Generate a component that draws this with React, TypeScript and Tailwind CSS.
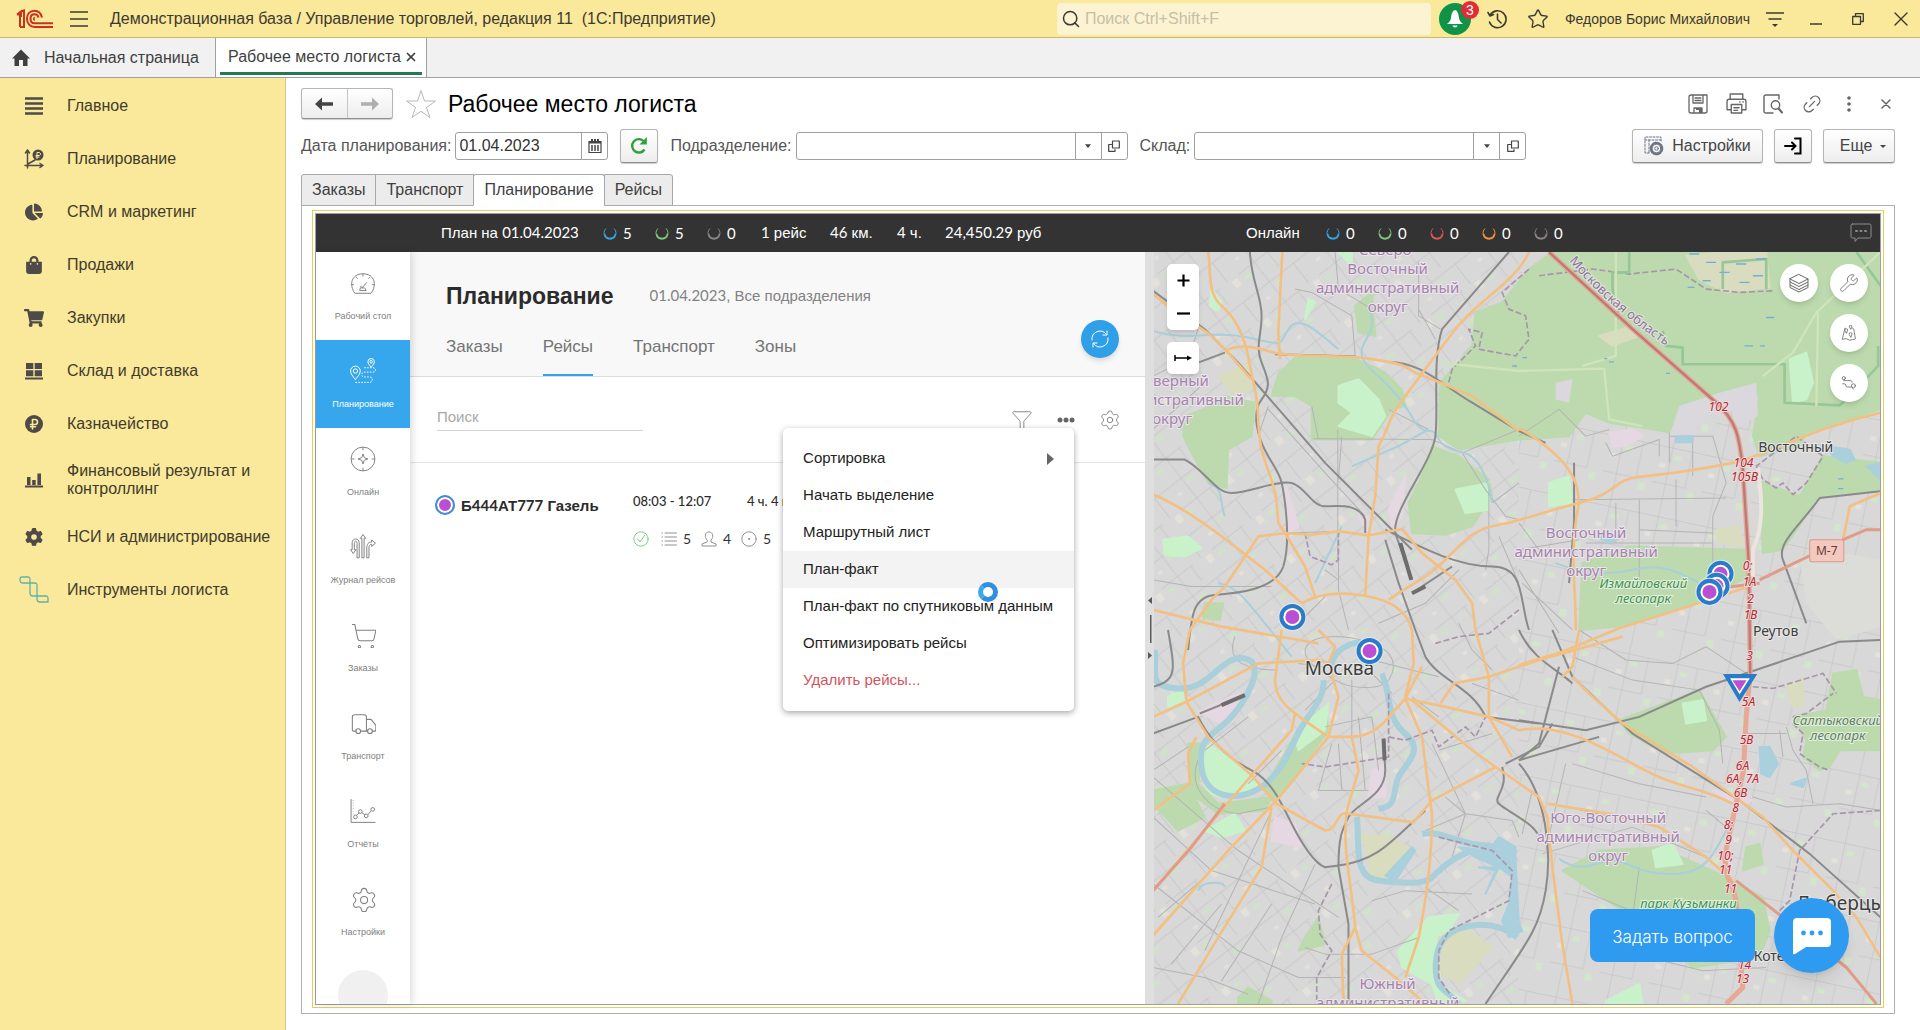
import type { ReactNode } from 'react'
import { Filter, Link2, Search, Settings, ShoppingCart, Star, Truck, Wrench, X } from 'lucide-react'
import { FaChartPie, FaShoppingBag, FaShoppingCart } from 'react-icons/fa'
import { FaGear } from 'react-icons/fa6'

interface IconProps {
  children: ReactNode
  className?: string
  box?: string
}

function Icon({ children, className = 'size-5', box = '0 0 24 24' }: IconProps) {
  return (
    <svg
      viewBox={box}
      className={`shrink-0 ${className}`}
      fill="none"
      stroke="currentColor"
      strokeLinecap="round"
      strokeLinejoin="round"
      aria-hidden="true"
    >
      {children}
    </svg>
  )
}

/* ---------- Title bar ---------- */

function Logo() {
  return (
    <svg viewBox="0 0 38 20" className="h-5 w-[38px] shrink-0" fill="none" stroke="#c8321f" strokeWidth="2" aria-hidden="true">
      <path d="M1 5.5 5 2.5V8M1 5.5H4V18M4 18H8V1.5L5 2.5" />
      <path d="M26 8.5C25 4 22 1.7 18.5 1.7C14 1.7 11 5 11 9.7C11 14.5 14 18 18.5 18H37" />
      <path d="M22.5 8.5C22 6.5 20.5 5.3 18.5 5.3C16 5.3 14.5 7.2 14.5 9.7C14.5 12.5 16.2 14.3 18.7 14.3H37" />
      <path d="M19 8.5C17 9 17.5 11 19 11" strokeWidth="1.5" />
    </svg>
  )
}

function TitleBar() {
  return (
    <header className="flex h-[38px] shrink-0 items-center border-b border-[#c9b868] bg-[#fae89b] pl-4 text-[#3c3a30]">
      <Logo />
      <button aria-label="Меню" className="ml-4">
        <Icon className="size-[18px]" box="0 0 18 18">
          <path d="M0 2H18M0 9H18M0 16H18" strokeWidth="1.5" />
        </Icon>
      </button>
      <h1 className="ml-[22px] text-base whitespace-pre">Демонстрационная база / Управление торговлей, редакция 11  (1С:Предприятие)</h1>

      <label className="ml-auto flex h-8 w-[374px] items-center gap-1 rounded-sm bg-[#fcf3d3] pl-1">
        <Search className="size-5 shrink-0" strokeWidth={1.8} />
        <span className="sr-only">Поиск</span>
        <input placeholder="Поиск Ctrl+Shift+F" className="h-full min-w-0 flex-1 bg-transparent text-base outline-none placeholder:text-[#c6bfa4]" />
      </label>
      <button aria-label="Уведомления" className="relative ml-2 flex size-8 items-center justify-center rounded-full bg-[#0f9347] text-white">
        <svg viewBox="0 0 20 20" className="size-5" fill="currentColor" aria-hidden="true">
          <path d="M10 1C7 2 6.5 5 6 9C5.5 12 4 13 2 15H18C16 13 14.5 12 14 9C13.5 5 13 2 10 1ZM7.5 16.5C8 19 12 19 12.5 16.5Z" />
        </svg>
        <span className="absolute -top-0.5 -right-2 flex size-[18px] items-center justify-center rounded-full bg-[#e12b35] text-sm">3</span>
      </button>
      <button aria-label="История" className="ml-4">
        <Icon className="size-5" box="0 0 20 20">
          <path d="M3.2 6A8.5 8.5 0 1 1 2.5 13M1 3.5 3 7 6.5 5.5M10.500 5V10.5L14 14" strokeWidth="1.6" />
        </Icon>
      </button>
      <button aria-label="Избранное" className="ml-5">
        <Star className="size-[22px]" strokeWidth={1.5} />
      </button>
      <span className="ml-4 text-sm">Федоров Борис Михайлович</span>
      <button aria-label="Сервис" className="ml-4">
        <Icon className="size-[18px]" box="0 0 18 18">
          <path d="M0 3H18M3 9H15" strokeWidth="1.5" />
          <path d="M6 14H12L9 17Z" fill="currentColor" stroke="none" />
        </Icon>
      </button>
      <button aria-label="Свернуть" className="ml-[26px]">
        <Icon className="size-3" box="0 0 12 12">
          <path d="M0 11H12" strokeWidth="1.4" />
        </Icon>
      </button>
      <button aria-label="Восстановить" className="ml-[30px]">
        <Icon className="size-3" box="0 0 12 12">
          <path d="M.7 3.5H8.5V11.3H.7ZM3.5 3V.7H11.3V8.5H9" strokeWidth="1.3" />
        </Icon>
      </button>
      <button aria-label="Закрыть" className="mr-3 ml-[30px]">
        <Icon className="size-[14px]" box="0 0 14 14">
          <path d="M1 1 13 13M13 1 1 13" strokeWidth="1.4" />
        </Icon>
      </button>
    </header>
  )
}

function WindowTabs() {
  return (
    <nav className="flex h-10 shrink-0 border-b border-[#a0a0a0] bg-[#f1f1f1] text-base text-[#3f3f3f]">
      <a href="#home" className="flex w-[215px] items-center gap-3.5 pl-3 whitespace-nowrap">
        <svg viewBox="0 0 18 18" className="size-[18px] shrink-0" fill="currentColor" aria-hidden="true">
          <path d="M9 .5 18 9.500H15.500V17H11V11H7V17H2.500V9.500H0Z" />
        </svg>
        Начальная страница
      </a>
      <div className="flex w-[212px] border-x border-[#a0a0a0] bg-white px-1 pb-0.5">
        <div className="flex w-full items-center justify-between border-b-[3px] border-[#217a53] pt-1 pr-1 pl-2 whitespace-nowrap">
          <a href="#logist">Рабочее место логиста</a>
          <button aria-label="Закрыть вкладку">
            <X className="size-[14px]" strokeWidth={3} />
          </button>
        </div>
      </div>
    </nav>
  )
}

/* ---------- Yellow section panel ---------- */

const sections: { label: string; icon: ReactNode }[] = [
  {
    label: 'Главное',
    icon: (
      <Icon className="size-[18px]" box="0 0 18 18">
        <path d="M0 1.500H18M0 6.500H18M0 11.500H18M0 16.500H18" strokeWidth="2.400" strokeLinecap="butt" />
      </Icon>
    ),
  },
  {
    label: 'Планирование',
    icon: (
      <Icon className="size-5" box="0 0 20 20">
        <path d="M3.500 19V2M1.500 4 3.500 1 5.500 4M1 16.500H18M16 14.500 19 16.500 16 18.500M4 15 11 11" strokeWidth="1.500" />
        <circle cx="14" cy="6" r="5.500" fill="currentColor" stroke="none" />
        <path d="M13 9.500V3.500H15C17 3.500 17 6.500 15 6.500H12M12 8H15" stroke="#fae89b" />
      </Icon>
    ),
  },
  { label: 'CRM и маркетинг', icon: <FaChartPie className="size-[18px]" /> },
  { label: 'Продажи', icon: <FaShoppingBag className="size-[18px]" /> },
  { label: 'Закупки', icon: <FaShoppingCart className="size-5" /> },
  {
    label: 'Склад и доставка',
    icon: (
      <svg viewBox="0 0 18 18" className="size-[18px]" fill="currentColor" aria-hidden="true">
        <path d="M1 1H8.300V7H1ZM9.700 1H17V7H9.700ZM1 8.300H8.300V14.300H1ZM9.700 8.300H17V14.300H9.700ZM0 15.500H18V17.500H0Z" />
      </svg>
    ),
  },
  {
    label: 'Казначейство',
    icon: (
      <Icon className="size-[18px]" box="0 0 18 18">
        <circle cx="9" cy="9" r="9" fill="currentColor" stroke="none" />
        <path d="M7.500 14V4.500H10C13.300 4.500 13.300 9.500 10 9.500H5.500M5.500 11.700H10.500" stroke="#fae89b" strokeWidth="1.600" />
      </Icon>
    ),
  },
  {
    label: 'Финансовый результат и контроллинг',
    icon: (
      <svg viewBox="0 0 18 16" className="h-4 w-[18px]" fill="currentColor" aria-hidden="true">
        <path d="M2 5H5.500V13H2ZM7.200 8H10.700V13H7.200ZM12.400 1.500H16V13H12.400ZM0 13.500H18V15.500H0Z" />
      </svg>
    ),
  },
  { label: 'НСИ и администрирование', icon: <FaGear className="size-[18px]" /> },
  {
    label: 'Инструменты логиста',
    icon: (
      <Icon className="size-[30px]" box="0 0 30 30">
        <g stroke="#62b1a9" strokeWidth="1.300">
          <path d="M1 4C1 2 2 2 3 2H9C11 2 11 3 11 5V8H4C2 8 1 7 1 5Z" />
          <path d="M11 8H16C18 8 18 9 18 11V21H14C12 21 11 20 11 18Z" />
          <path d="M18 21H27C29 21 29 22 29 24V27H21C19 27 18 26 18 24Z" />
        </g>
      </Icon>
    ),
  },
]

function SectionPanel() {
  return (
    <aside className="w-[286px] shrink-0 border-r border-[#d3c687] bg-[#fae89b] pt-px">
      {sections.map(({ label, icon }) => (
        <a key={label} href="#section" className="flex min-h-[53px] items-center py-3 pr-3 text-base leading-[18px] text-[#3f3c2c]">
          <span className="flex w-[67px] shrink-0 items-center justify-center text-[#4d4a48]">{icon}</span>
          {label}
        </a>
      ))}
    </aside>
  )
}

/* ---------- Form header ---------- */

const raised = 'rounded-[3px] border border-[#b5b5b5] border-b-[#8f8f8f] bg-gradient-to-b from-white to-[#ededed] shadow-[0_1px_1px_rgba(0,0,0,0.2)]'

function FormHeader() {
  return (
    <div className="flex items-center">
      <div className={`flex h-[31px] w-[92px] ${raised}`}>
        <button aria-label="Назад" className="flex flex-1 items-center justify-center border-r border-[#c4c4c4] text-[#444]">
          <svg viewBox="0 0 18 14" className="h-[14px] w-[18px]" fill="currentColor" aria-hidden="true">
            <path d="M0 7 7 0.500V5.300H18V8.700H7V13.500Z" />
          </svg>
        </button>
        <button aria-label="Вперед" className="flex flex-1 items-center justify-center text-[#b0b0b0]">
          <svg viewBox="0 0 18 14" className="h-[14px] w-[18px]" fill="currentColor" aria-hidden="true">
            <path d="M18 7 11 0.500V5.300H0V8.700H11V13.500Z" />
          </svg>
        </button>
      </div>
      <button aria-label="В избранное" className="ml-3 text-[#b8b8b8]">
        <svg viewBox="0 0 32 30" className="h-[30px] w-8" fill="none" stroke="currentColor" aria-hidden="true">
          <path d="M16 1.500 19.500 12H30.500L21.500 18.500 25 28.500 16 22.300 7 28.500 10.500 18.500 1.500 12H12.500Z" />
        </svg>
      </button>
      <h2 className="ml-[11px] text-[23px] leading-[30px] text-black">Рабочее место логиста</h2>
      <div className="ml-auto flex items-center text-[#666]">
        <button aria-label="Сохранить">
          <Icon className="size-5" box="0 0 20 20">
            <path d="M1 3V17Q1 19 3 19H17Q19 19 19 17V1H3Q1 1 1 3ZM5 1V9H15V1M7 4H13M7 6.500H13M6 19V14H14V19" strokeWidth="1.300" />
            <path d="M8 14H14V19H11V16H8Z" fill="currentColor" stroke="none" />
          </Icon>
        </button>
        <button aria-label="Печать" className="ml-[18px]">
          <Icon className="size-[21px]" box="0 0 20 20">
            <path d="M4 6V1H16V6M4 16H1V8Q1 6 3 6H17Q19 6 19 8V16H16M5 11H15V19H5ZM7.500 14H12.500M7.500 16.500H11M13 8.500H13.500M16 8.500H16.500" strokeWidth="1.300" />
          </Icon>
        </button>
        <button aria-label="Предварительный просмотр" className="ml-4">
          <Icon className="size-5" box="0 0 20 20">
            <path d="M10 19H3Q1 19 1 17V3Q1 1 3 1H16V5" strokeWidth="1.400" />
            <circle cx="12.500" cy="11" r="4.200" strokeWidth="1.400" />
            <path d="M15.500 14.500 19 18.500" strokeWidth="2" />
          </Icon>
        </button>
        <button aria-label="Получить ссылку" className="ml-[18px]">
          <Link2 className="size-[22px] -rotate-45" strokeWidth={1.4} />
        </button>
        <button aria-label="Дополнительно" className="ml-4">
          <svg viewBox="0 0 20 20" className="size-5" fill="currentColor" aria-hidden="true">
            <circle cx="10" cy="4" r="1.800" />
            <circle cx="10" cy="10" r="1.800" />
            <circle cx="10" cy="16" r="1.800" />
          </svg>
        </button>
        <button aria-label="Закрыть форму" className="mr-1 ml-[22px]">
          <Icon className="size-[10px]" box="0 0 10 10">
            <path d="M1 1 9 9M9 1 1 9" strokeWidth="1.5" />
          </Icon>
        </button>
      </div>
    </div>
  )
}

function LookupField({ id, label }: { id: string; label: string }) {
  return (
    <div className="flex items-center">
      <label htmlFor={id} className="pr-1 text-[#555]">
        {label}
      </label>
      <div className="flex h-7 w-[332px] rounded-[3px] border border-[#a0a0a0] bg-white">
        <input id={id} className="min-w-0 flex-1 px-1 outline-none" />
        <button aria-label={`${label} выбрать из списка`} className="flex w-[26px] items-center justify-center border-l border-[#a0a0a0] text-[#444]">
          <svg viewBox="0 0 8 5" className="h-1 w-1.5" fill="currentColor" aria-hidden="true">
            <path d="M0 0H8L4 5Z" />
          </svg>
        </button>
        <button aria-label={`${label} открыть`} className="flex w-[26px] items-center justify-center border-l border-[#a0a0a0] text-[#444]">
          <Icon className="size-3" box="0 0 12 12">
            <path d="M4.500 1H11.300V8H4.500ZM3.500 4.500H.7V11.300H7V9.500" strokeWidth="1.200" />
          </Icon>
        </button>
      </div>
    </div>
  )
}

function FilterRow() {
  return (
    <div className="mt-2.5 flex h-[34px] items-center text-base">
      <label htmlFor="plan-date" className="pr-1 text-[#555]">
        Дата планирования:
      </label>
      <div className="flex h-7 w-[153px] rounded-[3px] border border-[#a0a0a0]">
        <input id="plan-date" defaultValue="01.04.2023" className="min-w-0 flex-1 px-[3px] text-[#333] outline-none" />
        <button aria-label="Календарь" className="flex w-[26px] items-center justify-center border-l border-[#a0a0a0] text-[#444]">
          <svg viewBox="0 0 14 14" className="size-[14px]" fill="none" stroke="currentColor" aria-hidden="true">
            <path d="M1 2.500H13V13.500H1Z" strokeWidth="1.200" />
            <path d="M1 3.500H13M4 0V3M7 0V3M10 0V3" strokeWidth="2" />
            <path d="M3 7H5M6 7H8M9 7H11M3 9H5M6 9H8M9 9H11M3 11H5M6 11H8M9 11H11" strokeWidth="1.300" />
          </svg>
        </button>
      </div>
      <button aria-label="Обновить" className={`mr-3 ml-3 flex h-[34px] w-[38px] items-center justify-center ${raised}`}>
        <svg viewBox="0 0 18 18" className="size-[18px]" fill="none" stroke="#2fa23b" strokeWidth="2.4" aria-hidden="true">
          <path d="M14.500 12.500A6.700 6.700 0 1 1 13.500 4" />
          <path d="M16.800 0V7.500H9.500Z" fill="#2fa23b" stroke="none" />
        </svg>
      </button>
      <LookupField id="department" label="Подразделение:" />
      <div className="w-3 shrink-0" />
      <LookupField id="warehouse" label="Склад:" />
      <div className="ml-auto flex gap-[11px] text-[#444]">
        <button className={`flex h-[34px] w-[131px] items-center justify-center gap-2 ${raised}`}>
          <Icon className="size-5 text-[#6c7484]" box="0 0 20 20">
            <path d="M5 17H1V1H17V5M1 4H17M5 4V17" strokeWidth="1" strokeDasharray="2 1.500" />
            <circle cx="12.500" cy="12.500" r="5.500" strokeWidth="2.600" strokeDasharray="2.600 1.720" />
            <circle cx="12.500" cy="12.500" r="4.300" fill="#f7f7f7" />
            <circle cx="12.500" cy="12.500" r="1.800" />
          </Icon>
          Настройки
        </button>
        <button aria-label="Войти" className={`flex h-[34px] w-[38px] items-center justify-center text-black ${raised}`}>
          <Icon className="size-[18px]" box="0 0 18 18">
            <path d="M1 9H11M8 5.500 11.500 9 8 12.500M11 1.500H16.500V16.500H11" strokeWidth="2" strokeLinejoin="miter" />
          </Icon>
        </button>
        <button className={`flex h-[34px] w-[72px] items-center justify-center gap-2 pl-2 ${raised}`}>
          Еще
          <svg viewBox="0 0 6 3" className="h-[3px] w-1.5" fill="currentColor" aria-hidden="true">
            <path d="M0 0H6L3 3Z" />
          </svg>
        </button>
      </div>
    </div>
  )
}

function FormTabs() {
  const tab = 'h-8 border border-[#a8a8a8] px-2.5 text-base text-[#3f3f3f]'
  return (
    <div className="relative z-10 mt-[11px] -mb-px flex" role="tablist">
      <button role="tab" className={`${tab} rounded-tl-[3px] bg-[#ececec]`}>Заказы</button>
      <button role="tab" className={`${tab} -ml-px bg-[#ececec]`}>Транспорт</button>
      <button role="tab" aria-selected="true" className={`${tab} -ml-px rounded-t-[3px] border-b-white bg-white`}>Планирование</button>
      <button role="tab" className={`${tab} -ml-px rounded-tr-[3px] bg-[#ececec]`}>Рейсы</button>
    </div>
  )
}

/* ---------- Embedded planner ---------- */

const numeric = "font-['Lato',sans-serif]"

function Counter({ color, value }: { color: string; value: string }) {
  return (
    <span className={`flex w-[52px] items-center gap-1.5 ${numeric}`}>
      <svg viewBox="0 0 14 14" className="size-[14px]" fill="none" stroke={color} aria-hidden="true">
        <path d="M3 2.500A6 6 0 1 0 11 2.500" strokeWidth="1" />
        <path d="M1.500 8A5.600 5.600 0 0 0 12.500 8" strokeWidth="1.700" />
      </svg>
      {value}
    </span>
  )
}

function StatusBar() {
  return (
    <div className="flex h-[38px] shrink-0 items-center bg-[#333] pr-2 pl-[125px] text-[15px] text-white">
      <span className="w-[162px]">
        План на <span className={numeric}>01.04.2023</span>
      </span>
      <Counter color="#36a3e6" value="5" />
      <Counter color="#7cc47f" value="5" />
      <Counter color="#858585" value="0" />
      <span className="ml-0.5 w-[69px]">
        <span className={numeric}>1</span> рейс
      </span>
      <span className="w-[67px]">
        <span className={numeric}>46</span> км.
      </span>
      <span className="w-12">
        <span className={numeric}>4</span> ч.
      </span>
      <span>
        <span className={numeric}>24,450.29</span> руб
      </span>
      <div className="ml-auto flex items-center">
        <span className="w-20">Онлайн</span>
        <Counter color="#36a3e6" value="0" />
        <Counter color="#7cc47f" value="0" />
        <Counter color="#dc5558" value="0" />
        <Counter color="#f0943c" value="0" />
        <Counter color="#8a8086" value="0" />
      </div>
      <button aria-label="Сообщения" className="ml-[264px] text-[#8d8d8d]">
        <Icon className="size-[22px]" box="0 0 22 22">
          <path d="M2.500 2H19.500Q21 2 21 3.500V14.500Q21 16 19.500 16H8L5 19.500V16H2.500Q1 16 1 14.500V3.500Q1 2 2.500 2Z" />
          <path d="M6 9H7M10.500 9H11.500M15 9H16" strokeWidth="2" />
        </Icon>
      </button>
    </div>
  )
}

const modules: { label: string; active?: boolean; icon: ReactNode }[] = [
  {
    label: 'Рабочий стол',
    icon: (
      <>
        <path d="M4.500 21.500C-1 14 1 3.500 12 3.500C23 3.500 25 14 19.500 21.500ZM12 3.500V6M5.500 6.500 7 8M18.500 6.500 17 8M1 13.500H3.500M20.500 13.500H23" />
        <path d="M9 19 9.500 16.500H13.500L15 19ZM11 16.500 15.500 11.500M9.500 16 10.500 14.500" />
      </>
    ),
  },
  {
    label: 'Планирование',
    active: true,
    icon: (
      <>
        <path d="M5 20C2.500 16.500 .5 14.500 .5 12A4.500 4.500 0 0 1 9.500 12C9.500 14.500 7.500 16.500 5 20ZM19.500 8.500C17.500 6 16.500 5 16.500 3.500A3 3 0 0 1 22.500 3.500C22.500 5 21.500 6 19.500 8.500Z" />
        <circle cx="5" cy="12" r="2" />
        <circle cx="19.500" cy="3.500" r="1.200" />
        <path d="M5 22.500H18Q20.500 22.500 20.500 20T18 17.500H13Q11 17.500 11 15.500T13 13H21Q23.500 13 23.500 11T21 9H12" strokeDasharray="1.500 1.200" />
      </>
    ),
  },
  {
    label: 'Онлайн',
    icon: (
      <>
        <circle cx="12" cy="12" r="11" />
        <path d="M12 1V4M12 20V23M1 12H4M20 12H23M12 7.500 13.200 10.800 16.500 12 13.200 13.200 12 16.500 10.800 13.200 7.500 12 10.800 10.800Z" />
      </>
    ),
  },
  {
    label: 'Журнал рейсов',
    icon: (
      <path d="M3 18 .5 14.500H2V8C2 3.500 8.500 3.500 8.500 8V22H6.500V8.500C6.500 6 4 6 4 8.500V14.500H5.500ZM11 22V4H9.500L12 .5 14.500 4H13V22ZM15.500 22V13C15.500 9 17 7.500 20 7.500V5.500L23.500 8.500 20 11.500V9.500C18 9.500 17.500 11 17.500 13V22Z" />
    ),
  },
  { label: 'Заказы', icon: <ShoppingCart className="size-[26px]" strokeWidth={0.9} /> },
  { label: 'Транспорт', icon: <Truck className="size-[26px]" strokeWidth={0.9} /> },
  {
    label: 'Отчёты',
    icon: (
      <>
        <path d="M1 1V22.500H23.500" />
        <path d="M3 2V15" strokeDasharray=".5 2" />
        <circle cx="5" cy="17.500" r="1.700" />
        <circle cx="9.500" cy="12.500" r="1.700" />
        <circle cx="15" cy="16.500" r="1.700" />
        <circle cx="21" cy="10.500" r="1.700" />
        <path d="M6 16 8.500 13.800M11 13.500 13.500 15.500M16.500 15.500 19.500 11.700" />
      </>
    ),
  },
  { label: 'Настройки', icon: <Settings className="size-[26px]" strokeWidth={0.9} /> },
]

function ModuleRail() {
  return (
    <nav className="relative z-10 w-[94px] shrink-0 overflow-hidden bg-white shadow-[2px_0_8px_rgba(0,0,0,0.15)]">
      {modules.map(({ label, active, icon }) => (
        <a
          key={label}
          href="#module"
          className={`flex h-[88px] flex-col items-center justify-center gap-3.5 text-[9px] leading-3 whitespace-nowrap ${active ? 'bg-[#36a7ec] text-white' : 'text-[#808080]'}`}
        >
          <svg viewBox="0 0 24 24" className="size-[26px] shrink-0" fill="none" stroke="currentColor" strokeWidth="0.9" aria-hidden="true">
            {icon}
          </svg>
          {label}
        </a>
      ))}
      <div className="mx-auto mt-3.5 size-[50px] rounded-full bg-[#f0f0f0]" />
    </nav>
  )
}

const menuItems = ['Сортировка', 'Начать выделение', 'Маршрутный лист', 'План-факт', 'План-факт по спутниковым данным', 'Оптимизировать рейсы', 'Удалить рейсы...']

function TripMenu() {
  return (
    <div role="menu" className="absolute top-[176px] right-[71px] w-[291px] rounded-[5px] bg-white py-3 text-[15px] text-[#222] shadow-[0_2px_6px_rgba(0,0,0,0.35)]">
      {menuItems.map((item, i) => (
        <button
          key={item}
          role="menuitem"
          className={`flex h-[37px] w-full items-center justify-between px-5 whitespace-nowrap ${i === 3 ? 'bg-[#f3f3f3]' : ''} ${i === 6 ? 'text-[#d4545c]' : ''}`}
        >
          {item}
          {i === 0 && (
            <svg viewBox="0 0 7 12" className="h-3 w-[7px]" fill="#666" aria-hidden="true">
              <path d="M0 0 7 6 0 12Z" />
            </svg>
          )}
        </button>
      ))}
      <span className="absolute top-[154px] right-[76px] size-5 rounded-full border-[5px] border-[#2f8fe3] border-l-[#38a8ef] bg-white" />
    </div>
  )
}

function TripsPane() {
  return (
    <section className="relative flex w-[47%] flex-col bg-white">
      <div className="relative border-b border-[#dcdcdc] bg-[#f8f8f8] pl-9">
        <div className="flex items-center pt-[30px]">
          <h3 className="text-[23px] leading-7 font-bold text-[#2b2b2b]">Планирование</h3>
          <span className="ml-9 text-[15px] text-[#828282]">
            <span className={numeric}>01.04.2023</span>, Все подразделения
          </span>
        </div>
        <div className="mt-5 flex gap-10 text-[17px] text-[#747474]" role="tablist">
          <button role="tab" className="h-[46px] pb-3">Заказы</button>
          <button role="tab" aria-selected="true" className="h-[46px] border-b-2 border-[#36a3e6] pb-2.5">Рейсы</button>
          <button role="tab" className="h-[46px] pb-3">Транспорт</button>
          <button role="tab" className="h-[46px] pb-3">Зоны</button>
        </div>
        <button aria-label="Обновить рейсы" className="absolute right-[26px] bottom-[18px] flex size-[38px] items-center justify-center rounded-full bg-[#2f9fe8] text-white shadow-md">
          <Icon className="size-5" box="0 0 20 20">
            <path d="M2 11A8 8 0 0 1 16.500 5.500M17 2V6H13M18 9A8 8 0 0 1 3.500 14.500M3 18V14H7" />
          </Icon>
        </button>
      </div>

      <div className="flex h-[86px] items-center border-b border-[#e4e4e4] pr-6 pl-[27px]">
        <input aria-label="Поиск" placeholder="Поиск" className="mb-1.5 h-7 w-[206px] border-b border-[#d4d4d4] text-[15px] outline-none placeholder:text-[#a8a8a8]" />
        <div className="ml-auto flex items-center gap-6 text-[#808080]">
          <button aria-label="Фильтр">
            <Filter className="size-[22px]" strokeWidth={1} />
          </button>
          <button aria-label="Действия" className="w-[18px]">
            <svg viewBox="0 0 18 6" className="h-1.5 w-[18px]" fill="#666" aria-hidden="true">
              <circle cx="3" cy="3" r="2.500" />
              <circle cx="9" cy="3" r="2.500" />
              <circle cx="15" cy="3" r="2.500" />
            </svg>
          </button>
          <button aria-label="Настройки списка">
            <Settings className="size-[22px]" strokeWidth={1} />
          </button>
        </div>
      </div>

      <div className="flex pt-[26px] pl-[25px] text-[#2b2b2b]">
        <span className="mt-1.5 size-5 rounded-full border-2 border-[#3b8fd6] bg-[#b94fd3] shadow-[inset_0_0_0_2px_white]" />
        <span className="mt-1 ml-1.5 w-[172px] text-[15px] leading-6 font-bold whitespace-nowrap">
          Б<span className={numeric}>444</span>АТ<span className={numeric}>777</span> Газель
        </span>
        <div className={`text-[13px] leading-6 ${numeric}`}>
          <div className="flex font-medium whitespace-nowrap">
            <span className="w-[114px]">08:03 - 12:07</span>
            <span>4 ч. 4 мин.</span>
          </div>
          <div className="mt-[14px] flex items-center text-sm leading-6 text-[#909090]">
            <Icon className="size-4 text-[#84c98a]" box="0 0 16 16">
              <circle cx="8" cy="8" r="7.200" />
              <path d="M4.500 8 7 11 11.500 4.500" />
            </Icon>
            <Icon className="ml-3 size-4" box="0 0 16 16">
              <path d="M4 2H15.500M4 6H15.500M4 10H15.500M4 14H15.500M1 2H1.500M1 6H1.500M1 10H1.500M1 14H1.500" />
            </Icon>
            <span className="w-6 pl-1.5 text-[#333]">5</span>
            <Icon className="size-4" box="0 0 16 16">
              <path d="M6 9C3 6 4 1 8 1C12 1 13 6 10 9V11L15 13V15H1V13L6 11Z" />
            </Icon>
            <span className="w-6 pl-1.5 text-[#333]">4</span>
            <Icon className="size-4" box="0 0 16 16">
              <circle cx="8" cy="8" r="7.200" />
              <circle cx="8" cy="8" r=".7" />
            </Icon>
            <span className="pl-1.5 text-[#333]">5</span>
          </div>
        </div>
      </div>

      <TripMenu />
    </section>
  )
}

/* ---------- Map ---------- */

// Geometry is drawn on a grid three times finer than the labels.
const parks = [
  'M420 375 470 325 560 318 640 325 700 350 740 370 790 420 800 470 760 480 700 570 520 570 520 470 470 440 400 440Z',
  'M135 560 140 500 220 470 260 440 350 460 340 560 270 600 265 715 210 700 160 610Z',
  'M880 590 960 620 1050 690 1060 740 1000 830 920 855 820 850 810 760 850 680Z',
  'M905 400 1000 290 1010 190 1090 160 1170 60 1240 9 2222 9 2222 480 2000 550 1980 590 1860 620 1840 560 1860 440 1740 440 1700 480 1640 490 1600 550 1510 535 1410 520 1340 490 1290 560 1140 570 960 600 900 560Z',
  'M1850 690 1980 740 2050 620 2222 640 2222 720 2040 740 1930 900 1870 910 1860 700Z',
  'M1330 940 1470 890 1830 900 1830 980 1640 1070 1440 1130 1320 1140Z',
  'M1440 1410 1680 1320 1760 1460 1720 1500 1580 1510 1470 1450Z',
  'M1380 1800 1560 1790 1740 1870 1870 1940 1890 2040 1860 2120 1660 2150 1540 2040 1270 1860Z',
  'M1960 1400 2060 1380 2080 1270 2150 1260 2170 1340 2222 1350 2222 1500 2100 1500 2070 1550 2040 1560 1990 1520 2000 1470Z',
  'M1820 1790 1860 1780 1870 1840 1810 1860Z',
  'M490 1420 560 1370 570 1440 450 1610 410 1650 380 1610Z',
  'M150 1480 200 1480 180 1600 240 1660 400 1640 380 1680 240 1690 160 1630Z',
  'M45 1620 150 1600 200 1700 120 1740 45 1660Z',
  'M500 2060 540 2000 560 2080 480 2100Z',
  'M300 2240 330 2210 400 2250 400 2259 300 2259Z',
  'M200 1060 255 1060 245 1110 195 1105Z',
  'M650 170 700 130 710 260 660 250Z',
]

const meadows = [
  'M600 410 660 390 720 450 740 500 700 560 600 530 640 490 600 460Z',
  'M75 870 150 860 190 895 140 920 80 915Z',
  'M190 1500C180 1640 230 1645 300 1640L360 1610 330 1560 215 1485Z',
  'M500 1420 570 1360 560 1440 480 1500 470 1460Z',
  'M780 2100 870 2000 960 1990 920 2060 900 2200 980 2250 900 2259 880 2200 790 2150Z',
  'M200 1740 290 1690 320 1740 250 1760Z',
  'M1230 700 1290 680 1300 760 1230 770Z',
  'M1540 1800 1600 1780 1630 1840 1550 1850Z',
  'M1630 1360 1690 1350 1700 1410 1640 1420Z',
  'M1400 2250 1500 2200 1510 2259 1400 2259Z',
  'M1950 330 2000 310 2020 400 2000 450 1960 460Z',
  'M950 720 1050 700 1050 780 980 790Z',
  'M90 1340 130 1320 140 1350 90 1370Z',
  'M510 150 530 160 500 210Z',
  'M220 120 250 160 240 185 215 170Z',
  'M600 10 640 10 640 50Z',
]

const builtUp = [
  'M440 700 480 830 450 850Z',
  'M750 780 800 680 790 800 760 830Z',
  'M410 1700 470 1720 490 1790 400 1770Z',
  'M700 1560 740 1540 740 1640 690 1640Z',
  'M1410 550 1480 540 1510 560 1460 590 1420 590Z',
  'M1720 1620 1840 1650 1790 1660Z',
  'M660 800 690 800 690 850Z',
  'M180 1385 300 1330 320 1340 250 1420Z',
]

const pale = [
  'M240 380 330 345 340 420 290 440Z',
  'M1640 20 1740 10 1880 10 1890 115 1760 130 1680 90Z',
  'M1730 840 1800 830 1810 890 1740 880Z',
  'M1500 260 1480 230 1380 260 1420 290Z',
  'M1940 1310 1990 1290 1990 1370 1960 1370Z',
  'M670 1750 760 1760 820 1800 760 1880 700 1880Z',
  'M900 2060 980 2030 1060 2090 960 2200 900 2160Z',
]

const rivers = [
  'M45 245C150 280 220 240 330 265S420 290 450 240S540 250 600 300',
  'M690 180C720 240 680 260 670 300S720 380 740 400S800 460 830 520',
  'M830 520C860 560 880 530 895 560S930 600 975 610S1050 690 1060 760',
  'M260 800C240 740 260 720 210 700M640 650 780 590 870 540',
  'M1250 940C1330 970 1400 980 1480 960S1610 960 1680 1000',
  'M1260 1825C1340 1880 1380 1820 1430 1830S1500 1870 1600 1870S1720 1820 1780 1700',
  'M240 1000C300 1010 330 1060 380 1120L460 1220M530 1000 610 830',
  'M180 1920C190 1890 260 1890 260 1910',
]

const wideRivers = [
  'M555 1290C560 1340 520 1380 490 1430S440 1560 370 1610',
  'M370 1610C290 1660 200 1640 190 1550S220 1460 270 1410S390 1240 320 1225S220 1320 120 1315S60 1260 50 1200',
  'M730 1270C760 1340 740 1400 800 1450S800 1540 780 1580S780 1670 720 1675',
  'M655 1700C665 1780 640 1880 720 1890S860 1900 880 1880S950 1810 1010 1800',
  'M850 1750C900 1740 940 1770 1000 1780S1090 1780 1110 1820',
  'M1135 2060C1060 2000 960 2020 920 2060S890 2180 900 2200S950 2240 960 2259',
  'M580 1250C580 1200 640 1170 690 1180',
]

const lakes = [
  'M960 1790 1050 1800 1080 1760 1130 1790 1130 1830 1140 2020 1150 2040 1110 2060 1090 2010 1110 1960 1120 1880 1080 1850 1010 1820Z',
  'M740 1875 820 1790 830 1800 770 1890Z',
  'M1040 1930 1070 1860 1020 1850 1080 1850Z',
  'M1860 1490 1890 1490 1915 1540 1890 1580 1865 1570Z',
  'M1610 560 1660 560 1660 578 1610 578Z',
  'M2060 590 2130 600 2145 630 2120 640 2080 620Z',
  'M2180 650 2222 640 2222 690Z',
  'M1980 1590 2000 1585 1990 1610 1955 1600Z',
  'M1370 860 1400 850 1440 865 1410 880Z',
]

const streets = [
  'M45 540 200 400 M180 240 150 330 45 380 M470 120 520 130 640 200 650 320 M590 10 600 120 700 180',
  'M390 480 560 670 680 800 M520 470 540 570 M525 568 880 570 M598 540 598 940 M600 690 610 560 M390 470 360 560',
  'M45 990 160 1010 400 1010 M440 850 600 845 M600 900 600 1020 630 1140 M560 960 600 990 M500 1100 560 1040',
  'M880 570 970 610 1040 720 1100 800 1140 810 M970 610 1140 540 M870 540 750 480 M840 180 890 270 M840 40 840 200 905 240',
  'M1140 560 1260 480 1340 560 1410 540 M1400 580 1420 620 1560 570 1560 620 M1590 560 1720 560 1760 700 1720 800 1720 1020 M1590 640 1590 550',
  'M1300 750 1760 745 M1500 840 1720 850 M1500 750 1500 1000 M1610 690 1610 830 M1660 560 1660 680 M1430 760 1430 880 M1340 880 1720 880',
  'M1140 900 1320 870 M1150 1000 1300 1140 M1140 960 1260 1150 M1140 820 1200 900',
  'M1320 1140 1460 1230 1600 1240 1700 1190 1820 1270 M1300 1220 1480 1290 1680 1320 1710 1380 1740 1440 1750 1540',
  'M1840 1640 1940 1670 2100 1660 2222 1680 M1940 1430 1960 1500 2000 1560 2020 1660 M1920 1440 1930 1520 M1820 1450 1940 1450',
  'M1210 1810 1480 1730 1700 1820 M1330 1920 1500 1990 1530 2120 1690 2160 1880 2150 M1500 1850 1480 2000 M1700 1680 1760 1730',
  'M290 1160C260 1240 330 1260 420 1260M500 1200C510 1150 620 1150 700 1180S770 1260 750 1290S640 1320 590 1290S500 1240 500 1200',
  'M640 1290V1460M590 1290 500 1380M700 1270 760 1330M560 1250 480 1240M700 1230 900 1280',
  'M45 1580 300 1800 600 2000 M45 1700 220 1860 530 1960 M400 1680 200 2100 M530 1840 430 2060 360 2259 M45 1900 300 2100 480 2180 620 2180',
  'M180 1530C150 1600 200 1680 300 1690L400 1670M540 1620 690 1620M540 1620 580 1480M600 1480 610 1620M660 1400 680 1620',
  'M45 2150 200 2180 330 2230 M500 2090 560 2110 700 2110 840 2060 M700 1950 800 1920 1000 1930 M860 1910 960 1980',
  'M880 1480 980 1690 1120 1710 1140 1760 M980 1690 940 1820 M900 1500 1060 1450 M920 1640 980 1690 860 1740',
  'M45 1560 150 1490 M200 1500 330 1400 M330 1600 430 1500 M60 2000 200 1880 M100 2140 250 1960 M250 2190 400 1960',
  'M700 1400 720 1560 M560 1430 700 1400 M820 1340 900 1400 M1000 1300 1140 1350 M960 1120 1000 1200 1060 1260',
  'M1050 700 1050 900 1040 960 M1140 700 1060 760 M1080 860 1140 1000 M720 1120 860 1060 960 960',
  'M1280 1540 1220 1800 M1300 1540 1500 1600 1700 1640 M1240 1660 1420 1700 M1180 1620 1150 1750',
]

const orange = [
  'M210 9C220 60 205 130 250 170S310 250 325 300L350 420C365 480 355 540 370 600S410 700 415 760L420 820 440 850',
  'M432 9 420 250 425 330 M45 135C150 220 210 240 260 300L340 390',
  'M260 305C300 285 340 290 400 308S600 315 690 328S790 345 830 370L880 390 1000 440 1140 545',
  'M1170 9C1130 100 1020 150 950 240S860 360 800 440S760 520 720 590L710 740 690 860 680 1040',
  'M45 735C160 780 300 900 380 960L490 1060 M260 1010 360 860 440 850 520 855 600 845 690 857 790 838 850 910 950 990 1000 1060 1010 1140',
  'M440 850 500 950 530 1040 M490 1060C560 1020 640 1030 690 1040S800 1070 820 1140L825 1240 800 1340',
  'M750 1050C820 1000 860 990 920 930S1000 840 1080 825S1200 790 1320 760S1420 690 1500 682S1680 660 1780 640S2000 540 2222 490',
  'M45 1080 250 1130 540 1180 M155 1140 220 1050 260 1010 M155 1140 135 1240 145 1350',
  'M45 1400 145 1355 360 1240 540 1230 570 1240 M145 1355 210 1460 340 1575 415 1660 560 1740C600 1740 590 1680 630 1690L820 1715',
  'M430 1140 410 1290C410 1360 470 1390 570 1460L640 1460C720 1455 740 1410 800 1345L850 1250M470 1390 460 1440 340 1575 45 1920',
  'M540 1140 590 1190 570 1240 600 1340 570 1460 415 1650 270 1800 45 2055 M400 1670 370 1850 240 2060 120 2259',
  'M640 1460 660 1560 625 1680C610 1800 640 1900 650 2030L670 2100 770 2180 860 2259M650 2030 610 2110 615 2259',
  'M800 1345 850 1460 870 1620 880 1690C880 1840 860 1960 840 2060L800 2180',
  'M800 1345 920 1370 1050 1400 1140 1440 M820 1350 1000 1500 1070 1550 1200 1640 1225 1700 1240 1850 1270 2080 1300 2259',
  'M1070 1550 880 1650 820 1720 M1050 1400 1120 1520 M1010 1140 1050 1280 1050 1400 M905 1360 945 1300 1050 1280 1200 1230 1450 1160',
  'M1140 535C1200 570 1300 640 1315 720L1320 760C1290 900 1310 1000 1310 1140M1140 1245 1270 1205 1440 1135 1660 1065 1830 1010',
  'M1320 1140 1300 1250 1270 1280 M1300 1280 1350 1330 1450 1420 1660 1550 1800 1650 1870 1700 1960 1800 2080 1920 2150 2000 2222 2120',
  'M1140 1440C1240 1420 1340 1460 1480 1540S1660 1600 1780 1660M1225 1660 1410 1690 1560 1730 1700 1820 1780 1890',
  'M2110 870 2130 770 2222 730 M175 1460 150 1510 155 1600 45 1680',
]

const rails = [
  'M335 9C340 100 370 140 370 200S350 290 370 340S400 410 370 450S355 560 390 620S430 680 440 760S450 900 435 950',
  'M45 125 200 240 300 340 560 640 820 900 M45 630H140C200 660 230 730 280 730S420 690 460 700S520 770 560 770S660 760 680 810L680 850',
  'M410 315 650 322 M750 338C850 340 900 400 1000 460L1140 545 1220 580',
  'M1110 9 910 240C880 330 900 480 890 560S760 780 770 850L820 990M820 1030 940 950',
  'M740 840C860 900 960 950 1060 950S1140 1050 1170 1140M740 870 780 1000 830 1140 860 1220C900 1290 1000 1310 1040 1400L1200 1420',
  'M180 340 260 310 M435 950C410 1020 300 1030 230 1035S160 1110 150 1200',
  'M45 1310C120 1290 110 1260 90 1140M45 1450 180 1400C220 1480 280 1530 340 1560S430 1660 460 1720S530 1840 560 1850L600 1845',
  'M735 1465 740 1560C740 1640 650 1660 630 1700S600 1760 600 1850L630 2020 630 2259M600 1845C720 1830 760 1770 860 1680',
  'M1140 1410 1340 1440 1500 1400 1700 1310 2100 1175 2222 1170 M1240 1140 1300 1280 1480 1450 1800 1650 2010 1810 2222 2000',
  'M1140 1530 1200 1480 1260 1250 M1140 1540C1220 1630 1240 1800 1220 1920S1160 2080 1040 2259 M1140 1140C1180 1230 1260 1260 1300 1300',
  'M1305 640 1305 820 1290 1000 M2222 725 2040 745C1980 830 1910 880 1930 930L2000 1120',
  'M1140 1530 1380 1460 M1100 1540 1200 1490 1240 1420 M1090 1550C1110 1620 1060 1640 1080 1660S1190 1720 1200 1760',
  'M185 1390 320 1335',
]

const borders = [
  'M1170 60 1090 130 1110 180 1160 200 1170 270 1130 320 1020 300 1030 250 990 240 1010 290 940 360 930 400',
  'M500 850 515 920 580 945 600 930 600 850 M1140 1080 1050 1150 960 1160 890 1180',
  'M1200 80 1360 60 1470 75 1610 60 1700 120 1800 130 1900 125',
  'M1850 650 1870 690 1910 715 1930 700 1960 735 2000 700 2050 620 1970 560 1850 650',
  'M1840 1310 1900 1315 2050 1270 2090 1330 M1960 1400 2000 1390 2080 1330 M1960 1420 1990 1450 1980 1510 2040 1550 2070 1560',
  'M750 1330 750 1520 560 1550 490 1540 M750 1460 800 1470 880 1440 900 1490 980 1430 1010 1460 1040 1400',
  'M900 1760 1060 1800 1120 1860 1110 1950 930 2040 900 2100 900 2180 940 2240',
  'M580 1900 540 1980 545 2050 580 2100 535 2180 535 2259 M2222 1680 2080 1690 1980 1800 1950 1950 1920 1980',
]

interface MapLabelProps {
  x: number
  y: number
  lines: string[]
}

function DistrictLabel({ x, y, lines }: MapLabelProps) {
  return (
    <text textAnchor="middle" fontSize="15" fill="#a383aa" stroke="#ece6ec" strokeWidth="2" paintOrder="stroke">
      {lines.map((line, i) => (
        <tspan key={line} x={x} y={y + i * 19}>
          {line}
        </tspan>
      ))}
    </text>
  )
}

const exits: [string, number, number][] = [
  ['102', 564, 159],
  ['104', 589, 214],
  ['105В', 590, 228],
  ['0;', 593, 317],
  ['1А', 595, 333],
  ['2', 596, 350],
  ['1В', 596, 366],
  ['3', 595, 407],
  ['5А', 594, 453],
  ['5В', 592, 491],
  ['6А', 588, 517],
  ['6А, 7А', 588, 530],
  ['6В', 586, 544],
  ['8', 581, 559],
  ['8;', 574, 575],
  ['9', 574, 590],
  ['10;', 571, 606],
  ['11', 571, 620],
  ['11', 576, 639],
  ['14', 590, 715],
  ['13', 588, 729],
]

const stops: [number, number][] = [
  [139, 364],
  [216, 398],
  [566, 321],
  [562, 333],
  [555, 339],
]

function Lines({ items, color, width, dash }: { items: string[]; color: string; width: number; dash?: string }) {
  return (
    <g fill="none" stroke={color} strokeWidth={width} strokeDasharray={dash} strokeLinejoin="round">
      {items.map((d) => (
        <path key={d} d={d} />
      ))}
    </g>
  )
}

function Areas({ items, color }: { items: string[]; color: string }) {
  return (
    <g fill={color} stroke={color} strokeWidth="6" strokeLinejoin="round">
      {items.map((d) => (
        <path key={d} d={d} />
      ))}
    </g>
  )
}

function CityMap() {
  return (
    <svg viewBox="0 0 726 750" preserveAspectRatio="xMidYMid slice" className="absolute inset-0 size-full font-['Noto_Sans',sans-serif]" role="img" aria-label="Карта Москвы">
      <defs>
        <pattern id="blocks" width="190" height="150" patternUnits="userSpaceOnUse" patternTransform="rotate(-38)">
          <path d="M0 20H190M0 95H120M60 0V150M150 20V95M110 95V150" fill="none" stroke="#c2c2c2" strokeWidth="2" />
          <path d="M70 30H95V42H70ZM8 110H30V122H8Z" fill="#cfe3c8" />
          <path d="M160 100H180V125H160ZM20 50H34V60H20Z" fill="#e4e1da" />
        </pattern>
        <pattern id="blocks-east" width="150" height="210" patternUnits="userSpaceOnUse" patternTransform="rotate(12)">
          <path d="M0 40H150M40 0V210M0 150H100M100 40V150" fill="none" stroke="#c2c2c2" strokeWidth="2" />
          <path d="M50 60H72V74H50ZM110 160H130V182H110Z" fill="#d3e6cc" />
          <path d="M10 90H28V104H10Z" fill="#e6e1da" />
        </pattern>
        <path id="oblast" d="M415 9Q455 57 530 106" />
      </defs>

      <rect width="726" height="750" fill="#d8d8d8" />
      <g transform="translate(-15 -3) scale(0.3333)">
        <path d="M45 9H1140V2259H45Z" fill="url(#blocks)" />
        <path d="M1140 9H2222V2259H1140Z" fill="url(#blocks-east)" />
        <Areas items={parks} color="#bcdaae" />
        <Areas items={meadows} color="#c9f2cb" />
        <Areas items={pale} color="#d9dcbf" />
        <Areas items={builtUp} color="#e6d8e2" />
        <path d="M1620 470 1740 430 1850 400 1855 500 1800 530 1780 490 1740 460 1640 560 1590 560ZM1250 400 1300 390 1290 460 1250 450Z" fill="#dad8dc" />
        <path d="M1980 920 2060 900 2222 930 2222 1130 2090 1170 2000 1060Z" fill="#dcdcd9" />
        <Lines items={streets} color="#b4b4b4" width={3} />
        <Lines items={rivers} color="#a9cfda" width={6} />
        <Lines items={wideRivers} color="#a9cfda" width={18} />
        <Areas items={lakes} color="#a9d0dc" />
        <Lines items={borders} color="#a994ab" width={5} dash="18 8" />
        <Lines
          items={['M1470 10 1470 70 1420 70 1420 120 1440 210 M1750 120 1750 40 1880 30 1880 120 M1570 245 1580 290 1630 295 1630 345 1935 345 1935 460 2100 468 2140 430 2215 350 2215 290 M2150 9 2222 110']}
          color="#96c796"
          width={8}
        />
        <Lines items={['M1140 365 1395 358 1410 510 1510 530 M2222 9 2030 190 1960 310 1870 380 M2035 190 2030 470 M1430 10 1430 320 1330 350 M900 340 1140 365']} color="#cfe4ba" width={7} />
        <Lines
          items={['M1650 15h30 M1700 40h30 M1740 70h30 M1790 45h30 M1840 80h30 M1800 100h30 M1690 95h24 M1880 205h24 M1815 290h26 M1862 290h14 M1150 325h14 M1120 350h14 M1395 328h10 M1410 338h14 M1580 372h12 M2095 688h16 M2095 717h16 M1645 115h20 M1850 30h30']}
          color="#76acd8"
          width={4}
        />
        <Lines items={rails} color="#8a8a8a" width={6} />
        <Lines items={['M785 880 818 990M735 1465 738 1530M820 1030 860 1010M250 1365 320 1335']} color="#6d6d6d" width={12} />
        <Lines items={orange} color="#f3c083" width={8} />
        <Lines items={['M1860 1000 1700 1020 M1860 990 2110 870 2180 840 2222 840 M1790 1890 1930 2000 2120 2150 2210 2259 M260 1660 160 1790 45 1920']} color="#e09c86" width={9} />
        <Lines
          items={['M1230 9 1480 240 1725 455C1790 510 1800 560 1810 660L1828 940 1832 1270 1820 1400 1812 1560 1790 1660 1755 1820 1765 1880C1800 1940 1790 2000 1800 2090L1810 2210 1760 2259']}
          color="#e8a896"
          width={15}
        />
        <Lines
          items={['M1230 9 1480 240 1725 455C1790 510 1800 560 1810 660L1828 940 1832 1270']}
          color="#ba7b78"
          width={7}
        />
        <path d="M1855 655C1870 760 1870 840 1840 900L1840 980" fill="none" stroke="#ebe5dd" strokeWidth="12" />
      </g>

      <DistrictLabel x={234} y={3} lines={['Северо-', 'Восточный', 'административный', 'округ']} />
      <DistrictLabel x={19} y={134} lines={['Северный', 'административный', 'округ']} />
      <DistrictLabel x={432} y={285} lines={['Восточный', 'административный', 'округ']} />
      <DistrictLabel x={454} y={569} lines={['Юго-Восточный', 'административный', 'округ']} />
      <DistrictLabel x={234} y={735} lines={['Южный', 'административный']} />
      <text fontSize="13" fill="#9270a0" stroke="#dfe8da" strokeWidth="2" paintOrder="stroke">
        <textPath href="#oblast">Московская область</textPath>
      </text>

      <g fontSize="13" fontStyle="italic" textAnchor="middle" fill="#3f9150" stroke="#e4f0de" strokeWidth="2" paintOrder="stroke">
        <text x="489" y="335">Измайловский</text>
        <text x="489" y="350">лесопарк</text>
        <text x="534" y="654">парк Кузьминки</text>
        <g fill="#5d7f62">
          <text x="683" y="472">Салтыковский</text>
          <text x="683" y="487">лесопарк</text>
        </g>
      </g>

      <g fill="#3d3d3d" stroke="#e8e8e8" strokeWidth="2" paintOrder="stroke" textAnchor="middle">
        <text x="186" y="422" fontSize="19">Москва</text>
        <text x="641" y="199" fontSize="14">Восточный</text>
        <text x="621" y="383" fontSize="14">Реутов</text>
        <text x="686" y="656" fontSize="19">Люберцы</text>
        <text x="639" y="707" fontSize="14">Котельники</text>
      </g>

      <g fontSize="12" fontStyle="italic" textAnchor="middle" fill="#b02a36" stroke="#f0dcda" strokeWidth="2" paintOrder="stroke">
        {exits.map(([text, x, y]) => (
          <text key={`${text}-${y}`} x={x} y={y}>
            {text}
          </text>
        ))}
      </g>

      <rect x="655" y="287" width="34" height="22" rx="2" fill="#f3c9bf" stroke="#d9988c" />
      <text x="672" y="302" fontSize="12" textAnchor="middle" fill="#6d3a35">
        М-7
      </text>

      {stops.map(([cx, cy]) => (
        <g key={cx}>
          <circle cx={cx} cy={cy} r="14" fill="#dfe9f2" />
          <circle cx={cx} cy={cy} r="11" fill="#fff" stroke="#2b7cc6" strokeWidth="4" />
          <circle cx={cx} cy={cy} r="7" fill="#b94fd3" />
        </g>
      ))}
      <path d="M572 423H599L585 445Z" fill="#fff" stroke="#2b7cc6" strokeWidth="4" />
      <path d="M578 427H592L585 438Z" fill="#b94fd3" />
    </svg>
  )
}

const roundButton = 'flex size-[38px] items-center justify-center rounded-full bg-white text-[#666] shadow-md'

function MapPane() {
  return (
    <section className="relative min-w-0 flex-1 overflow-hidden">
      <CityMap />
      <div className="absolute top-3 left-[13px] flex w-8 flex-col gap-3 text-black">
        <div className="flex flex-col rounded-[5px] bg-white shadow-md">
          <button aria-label="Приблизить" className="flex h-[33px] items-center justify-center">
            <Icon className="size-[13px]" box="0 0 13 13">
              <path d="M.5 6.500H12.500M6.500 .5V12.500" strokeWidth="2.200" strokeLinecap="butt" />
            </Icon>
          </button>
          <button aria-label="Отдалить" className="flex h-[33px] items-center justify-center">
            <Icon className="size-[13px]" box="0 0 13 13">
              <path d="M0 6.500H13" strokeWidth="2.200" strokeLinecap="butt" />
            </Icon>
          </button>
        </div>
        <button aria-label="Линейка" className="flex h-8 items-center justify-center rounded-[5px] bg-white shadow-md">
          <svg viewBox="0 0 18 8" className="h-2 w-[18px]" fill="none" stroke="currentColor" strokeWidth="1.5" aria-hidden="true">
            <path d="M1 1V7M1 4H15" />
            <path d="M13 1.500 18 4 13 6.500Z" fill="currentColor" stroke="none" />
          </svg>
        </button>
      </div>
      <div className="absolute top-3 right-3 flex gap-3">
        <button aria-label="Слои" className={roundButton}>
          <Icon className="size-5" box="0 0 20 20">
            <path d="M10 1.500 19 6 10 10.500 1 6ZM1 6V9L10 13.500 19 9V6M1 9.500V12L10 16.500 19 12V9.500M1 12.500V14.500L10 19 19 14.500V12.500" />
          </Icon>
        </button>
        <div className="flex flex-col gap-3">
          <button aria-label="Инструменты" className={roundButton}>
            <Wrench className="size-5" strokeWidth={1} />
          </button>
          <button aria-label="Точки" className={roundButton}>
            <Icon className="size-4" box="0 0 20 20">
              <path d="M5 4 1.500 18 6 17 11 19 18 17.500 16 5 13 3" strokeDasharray="3 1" />
              <path d="M6.500 10 4.800 7A1.800 1.800 0 1 1 8.200 7ZM12 5 10.500 2.500A1.600 1.600 0 1 1 13.500 2.500ZM12 15 10.300 12A1.800 1.800 0 1 1 13.700 12Z" />
            </Icon>
          </button>
          <button aria-label="Маршрут" className={roundButton}>
            <Icon className="size-4" box="0 0 20 20">
              <circle cx="3.500" cy="4" r="2" />
              <circle cx="15.500" cy="13.500" r="2.500" />
              <path d="M3.500 6V7H12Q14 7 14 9M15.500 17.500 13 15H8Q6 15 6 13T4 11H2" />
            </Icon>
          </button>
        </div>
      </div>
      <div className="absolute right-[31px] bottom-[31px] flex items-center gap-[19px]">
        <button className="h-[53px] w-[165px] rounded-lg bg-[#2f9bf0] pt-1 font-['Inter',sans-serif] text-[17px] font-light text-white">Задать вопрос</button>
        <button aria-label="Чат" className="flex size-[75px] items-center justify-center rounded-full bg-[#2f9bf0] shadow-lg">
          <svg viewBox="0 0 38 38" className="size-[38px]" aria-hidden="true">
            <path d="M4 1H34Q38 1 38 5V26Q38 30 34 30H13L2 37Q0 38 0 36V5Q0 1 4 1Z" fill="#fff" />
            <circle cx="10.500" cy="16" r="2.400" fill="#2f9bf0" />
            <circle cx="19" cy="16" r="2.400" fill="#2f9bf0" />
            <circle cx="27.500" cy="16" r="2.400" fill="#2f9bf0" />
          </svg>
        </button>
      </div>
    </section>
  )
}

function Splitter() {
  return (
    <div className="flex w-[9px] shrink-0 flex-col items-center justify-center bg-[#dfdfdf] text-[#5a5a5a]">
      <svg viewBox="0 0 6 62" className="h-[62px] w-1.5" fill="currentColor" aria-hidden="true">
        <path d="M5 0V7L1 3.500ZM3 18H4.500V46H3ZM1 55V62L5 58.500Z" />
      </svg>
    </div>
  )
}

export default function App() {
  return (
    <div className="flex h-screen flex-col overflow-hidden bg-white font-['Liberation_Sans',Arial,sans-serif]">
      <TitleBar />
      <WindowTabs />
      <div className="flex min-h-0 flex-1">
        <SectionPanel />
        <main className="flex min-w-0 flex-1 flex-col pt-2.5 pr-[25px] pb-4 pl-[15px]">
          <FormHeader />
          <FilterRow />
          <FormTabs />
          <div className="flex min-h-0 flex-1 border border-[#b0b0b6] px-2.5 pt-1 pb-[5px]">
            <div className="flex min-w-0 flex-1 border border-[#e6d05c] p-0.5">
              <div className="flex min-w-0 flex-1 flex-col border border-[#a0a0a0]">
                <StatusBar />
                <div className="flex min-h-0 flex-1">
                  <ModuleRail />
                  <TripsPane />
                  <Splitter />
                  <MapPane />
                </div>
              </div>
            </div>
          </div>
        </main>
      </div>
    </div>
  )
}
